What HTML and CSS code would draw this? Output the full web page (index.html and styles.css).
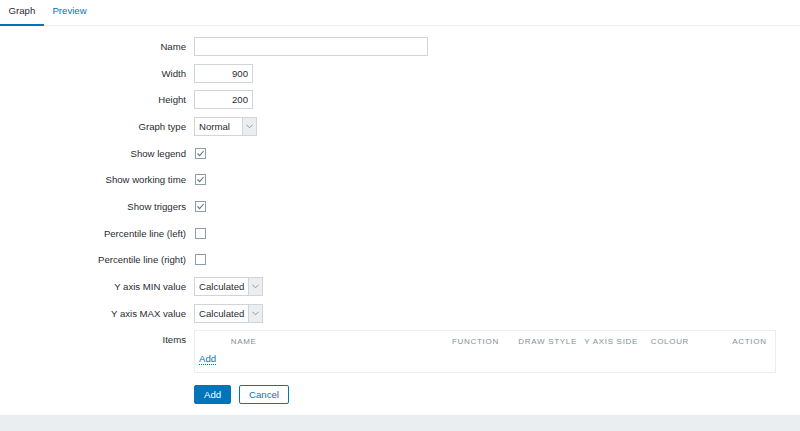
FILE: index.html
```html
<!DOCTYPE html>
<html>
<head>
<meta charset="utf-8">
<link rel="stylesheet" href="styles.css">
</head>
<body>
<div class="page">
  <nav class="tabs">
    <a class="tab active">Graph</a>
    <a class="tab">Preview</a>
  </nav>
  <form class="form">
    <label class="lbl">Name</label>
    <div class="ctl"><input class="inp name" type="text"></div>

    <label class="lbl">Width</label>
    <div class="ctl"><input class="inp num" type="text" value="900"></div>

    <label class="lbl">Height</label>
    <div class="ctl"><input class="inp num" type="text" value="200"></div>

    <label class="lbl">Graph type</label>
    <div class="ctl"><div class="sel w63"><span class="sel-val">Normal</span><span class="sel-btn"><svg width="7" height="5" viewBox="0 0 7 5"><path d="M0.5 0.8 L3.5 3.8 L6.5 0.8" fill="none" stroke="#8a989f" stroke-width="1"/></svg></span></div></div>

    <label class="lbl">Show legend</label>
    <div class="ctl"><span class="cb"><svg width="9" height="9" viewBox="0 0 9 9"><path d="M1.5 4.5 L3.6 6.7 L7.6 2" fill="none" stroke="#66767e" stroke-width="1.1"/></svg></span></div>

    <label class="lbl">Show working time</label>
    <div class="ctl"><span class="cb"><svg width="9" height="9" viewBox="0 0 9 9"><path d="M1.5 4.5 L3.6 6.7 L7.6 2" fill="none" stroke="#66767e" stroke-width="1.1"/></svg></span></div>

    <label class="lbl">Show triggers</label>
    <div class="ctl"><span class="cb"><svg width="9" height="9" viewBox="0 0 9 9"><path d="M1.5 4.5 L3.6 6.7 L7.6 2" fill="none" stroke="#66767e" stroke-width="1.1"/></svg></span></div>

    <label class="lbl">Percentile line (left)</label>
    <div class="ctl"><span class="cb"></span></div>

    <label class="lbl">Percentile line (right)</label>
    <div class="ctl"><span class="cb"></span></div>

    <label class="lbl">Y axis MIN value</label>
    <div class="ctl"><div class="sel w69"><span class="sel-val">Calculated</span><span class="sel-btn"><svg width="7" height="5" viewBox="0 0 7 5"><path d="M0.5 0.8 L3.5 3.8 L6.5 0.8" fill="none" stroke="#8a989f" stroke-width="1"/></svg></span></div></div>

    <label class="lbl">Y axis MAX value</label>
    <div class="ctl"><div class="sel w69"><span class="sel-val">Calculated</span><span class="sel-btn"><svg width="7" height="5" viewBox="0 0 7 5"><path d="M0.5 0.8 L3.5 3.8 L6.5 0.8" fill="none" stroke="#8a989f" stroke-width="1"/></svg></span></div></div>

    <label class="lbl lbl-top">Items</label>
    <div class="items">
      <div class="items-head">
        <span></span>
        <span>NAME</span>
        <span>FUNCTION</span>
        <span>DRAW STYLE</span>
        <span>Y AXIS SIDE</span>
        <span>COLOUR</span>
        <span class="act">ACTION</span>
      </div>
      <div class="items-add"><a class="link">Add</a></div>
    </div>

    <span></span>
    <div class="buttons">
      <button type="button" class="btn primary">Add</button>
      <button type="button" class="btn secondary">Cancel</button>
    </div>
  </form>
  <footer class="footer"></footer>
</div>
</body>
</html>
```
FILE: styles.css
```css
html, body {
  margin: 0;
  padding: 0;
  height: 100%;
  background: #ffffff;
}
body {
  font-family: "Liberation Sans", Arial, sans-serif;
  font-size: 9.6px;
  color: #1f2c33;
}
.page {
  display: flex;
  flex-direction: column;
  min-height: 100%;
}
.tabs {
  display: flex;
  height: 26px;
  box-sizing: border-box;
  border-bottom: 1px solid #ebeef0;
}
.tab {
  display: block;
  height: 26px;
  box-sizing: border-box;
  padding: 0 8.6px;
  line-height: 22px;
  color: #0275b8;
  font-size: 9.6px;
  margin-bottom: -1px;
}
.tab.active {
  color: #1f2c33;
  box-shadow: inset 0 -2px 0 #0275b8;
}
.form {
  display: grid;
  grid-template-columns: 186px 1fr;
  column-gap: 8px;
  row-gap: 7.67px;
  padding: 11px 24px 11px 0;
  grid-auto-rows: minmax(19px, auto);
}
.lbl {
  text-align: right;
  line-height: 19px;
  white-space: nowrap;
}
.lbl-top {
  line-height: 19px;
}
.ctl {
  display: flex;
  align-items: center;
  height: 19px;
}
.inp {
  box-sizing: border-box;
  height: 19px;
  border: 1px solid #cfd5d9;
  padding: 0 4px;
  font-family: inherit;
  font-size: 9.6px;
  color: #1f2c33;
  outline: none;
  margin: 0;
  background: #fff;
}
.inp.name { width: 234px; }
.inp.num { width: 59px; text-align: right; }
.sel {
  box-sizing: border-box;
  height: 19px;
  display: flex;
  border: 1px solid #cfd5d9;
  background: #fff;
}
.sel.w63 { width: 63px; }
.sel.w69 { width: 69px; }
.sel-val {
  flex: 1;
  padding-left: 4px;
  line-height: 17px;
  white-space: nowrap;
  overflow: hidden;
}
.sel-btn {
  width: 13px;
  border-left: 1px solid #cfd5d9;
  background: #ebeef0;
  display: flex;
  align-items: center;
  justify-content: center;
}
.cb {
  box-sizing: border-box;
  width: 11px;
  height: 11px;
  border: 1px solid #8f9da4;
  margin-left: 1px;
  display: flex;
  align-items: center;
  justify-content: center;
  background: #fff;
}
.items {
  box-sizing: border-box;
  width: 582px;
  height: 43px;
  border: 1px solid #ebeef0;
  padding: 0 4px;
}
.items-head {
  display: grid;
  grid-template-columns: 31.7px 221.3px 66.3px 66px 66.4px 81.6px 1fr;
  height: 20px;
  line-height: 21px;
  font-size: 8px;
  letter-spacing: 0.7px;
  color: #7f929c;
  white-space: nowrap;
}
.items-head .act {
  text-align: right;
  padding-right: 6px;
}
.items-add {
  line-height: 14px;
  padding-top: 1px;
}
.link {
  color: #0275b8;
  border-bottom: 1px dotted #0275b8;
  cursor: pointer;
}
.buttons {
  display: flex;
  gap: 8px;
  padding-top: 4px;
}
.btn {
  box-sizing: border-box;
  height: 19px;
  padding: 0 9px;
  font-family: inherit;
  font-size: 9.6px;
  border: 1px solid #0275b8;
  border-radius: 2px;
  margin: 0;
  line-height: 17px;
}
.btn.primary {
  background: #0275b8;
  color: #fff;
}
.btn.secondary {
  background: #fff;
  color: #0275b8;
}
.footer {
  flex: 1;
  background: #ebeef0;
}
```
